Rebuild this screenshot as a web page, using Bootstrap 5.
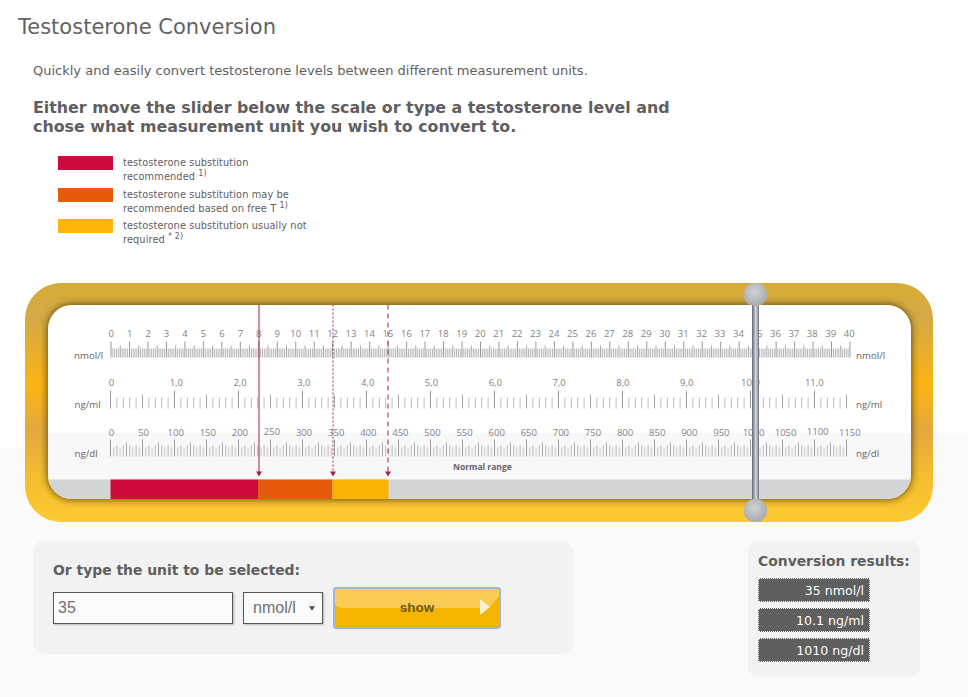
<!DOCTYPE html>
<html lang="en">
<head>
<meta charset="utf-8">
<title>Testosterone Conversion</title>
<link href="https://cdn.jsdelivr.net/npm/bootstrap@5.3.0/dist/css/bootstrap.min.css" rel="stylesheet">
<style>
html,body{height:697px;overflow:hidden}
body{font-family:"DejaVu Sans",Verdana,sans-serif;color:#5f5e60;
  background:linear-gradient(#fff,#fff) 0 433px/480px 15px no-repeat,linear-gradient(#fff 433px,#fafafa 433px) no-repeat}
.pg-title{font-size:21px;font-weight:400;line-height:24px;margin:15px 0 0 18px;color:#636265}
.pg-intro{font-size:13px;line-height:18px;margin:23px 0 0 33px}
.pg-lead{font-size:15.85px;font-weight:700;line-height:19px;margin:18px 0 0 33px}
.legend-box{margin:20px 0 0 58px}
.legend-item{height:31.5px}
.legend-swatch{width:55px;height:14px;margin-right:10px;flex:none}
.legend-text{font-size:9.8px;line-height:14px;letter-spacing:.1px;width:190px}
.legend-text sup{font-size:8px;top:-.45em;line-height:0}
.sw-red{background:#cf0a3c}.sw-orange{background:#e65a0c}.sw-yellow{background:#fdb50a}
.slide-frame{position:relative;width:908px;height:239px;margin:32.5px 0 0 25px;padding:21.5px 22.5px 23px;border-radius:36px;
  background:linear-gradient(#d6ac38 0,#d4aa45 15%,#fbb414 43%,#e2a93e 62%,#f2bd30 80%,#fcca30 100%)}
.slide-inner{height:194.5px;border-radius:24px;overflow:hidden;background:linear-gradient(#fff 128px,#f8f8f8 128px);
  box-shadow:0 0 7px 1px rgba(70,50,0,.75)}
.slide-inner svg{display:block}
.sc-num{font-family:"Open Sans",sans-serif;font-size:9.5px;fill:#828285;text-anchor:middle}
.sc-unit{font-family:"Open Sans",sans-serif;font-size:9.7px;fill:#646366}
.sc-range{font-family:"Open Sans",sans-serif;font-size:8.5px;font-weight:700;fill:#646366}
.slide-rod{position:absolute;left:727px;top:10px;width:7px;height:220px;background:linear-gradient(90deg,#5d6777,#a8aeb8 35%,#d8dce0 55%,#6a7280)}
.slide-knob{position:absolute;left:719px;width:23px;height:23px;border-radius:45%;background:radial-gradient(circle at 45% 40%,#d0d1d3,#a9aaad 75%,#8f9093)}
.knob-top{top:0}.knob-bot{bottom:0}
.lower-row{margin:19px 48px 0 33px}
.type-panel{width:540px;height:113px;background:#f2f2f2;border-radius:10px;padding:20px 20px 0}
.panel-head{font-size:13.9px;font-weight:700;line-height:18px;color:#5f5e60}
.unit-form{margin-top:8px;align-items:center}
.unit-input,.unit-select{font-family:"Liberation Sans",Arial,sans-serif;font-size:16px;color:#6f6f6f;height:32px;border:1px solid #555;border-radius:0;background-color:#fbfbfb;box-shadow:1px 1px 2px rgba(0,0,0,.25);padding:0 4px}
.unit-input{width:180px}
.unit-select{width:80px;margin-left:10px;padding:0 0 0 9px;background-position:right 7px center;background-size:6px 5px;
  background-image:url("data:image/svg+xml,%3csvg xmlns='http://www.w3.org/2000/svg' viewBox='0 0 8 6'%3e%3cpath fill='%23444' d='M0 0h8L4 6z'/%3e%3c/svg%3e")}
.show-btn{position:relative;overflow:hidden;width:168px;height:42px;margin-left:10px;padding:0;border:2px solid #9cb9dc;border-radius:3px;background:#f5b400;font-family:"Liberation Sans",Arial,sans-serif;font-size:13.5px;font-weight:700;color:#6e5820}
.show-btn:before{content:"";position:absolute;left:0;right:0;top:0;height:19px;background:#f9cb52;border-bottom-left-radius:8px 4px;clip-path:polygon(0 0,100% 0,100% 40%,94% 100%,0 100%)}
.show-btn b{position:relative}
.show-btn:after{content:"";position:absolute;right:9px;top:10px;border-left:10px solid #fdf3d0;border-top:8px solid transparent;border-bottom:8px solid transparent}
.result-panel{width:172px;height:136px;background:#f2f2f2;border-radius:10px;padding:11px 10px 10px}
.result-val{width:112px;height:24px;margin-top:6px;padding-right:5px;background:#5f5e60;color:#fff;border:1px dotted #fff;font-size:12.6px;line-height:24px;text-align:right}
.result-first{margin-top:8px}
</style>
</head>
<body>
<h1 class="pg-title">Testosterone Conversion</h1>
<p class="pg-intro">Quickly and easily convert testosterone levels between different measurement units.</p>
<h2 class="pg-lead">Either move the slider below the scale or type a testosterone level and<br>chose what measurement unit you wish to convert to.</h2>
<div class="legend-box d-flex flex-column">
  <div class="legend-item d-flex"><span class="legend-swatch sw-red"></span><span class="legend-text">testosterone substitution recommended <sup>1)</sup></span></div>
  <div class="legend-item d-flex"><span class="legend-swatch sw-orange"></span><span class="legend-text">testosterone substitution may be recommended based on free T <sup>1)</sup></span></div>
  <div class="legend-item d-flex"><span class="legend-swatch sw-yellow"></span><span class="legend-text">testosterone substitution usually not required <sup>* 2)</sup></span></div>
</div>
<div class="slide-frame">
  <div class="slide-inner">
    <svg id="scale" width="863" height="195" viewBox="47.5 304.5 863 195" xmlns="http://www.w3.org/2000/svg"></svg>
  </div>
  <div class="slide-rod"></div>
  <div class="slide-knob knob-top"></div>
  <div class="slide-knob knob-bot"></div>
</div>
<div class="lower-row d-flex justify-content-between align-items-start">
  <div class="type-panel">
    <div class="panel-head">Or type the unit to be selected:</div>
    <div class="unit-form d-flex">
      <input class="form-control unit-input" type="text" value="35">
      <select class="form-select unit-select"><option>nmol/l</option><option>ng/ml</option><option>ng/dl</option></select>
      <button class="btn show-btn" type="button"><b>show</b></button>
    </div>
  </div>
  <div class="result-panel">
    <div class="panel-head">Conversion results:</div>
    <div class="result-val result-first">35 nmol/l</div>
    <div class="result-val">10.1 ng/ml</div>
    <div class="result-val">1010 ng/dl</div>
  </div>
</div>
<script src="https://cdn.jsdelivr.net/npm/bootstrap@5.3.0/dist/js/bootstrap.bundle.min.js"></script>
<script>
(function(){
  var o=[];
  function tick(x,y1,y2,c){o.push('<line x1="'+x.toFixed(2)+'" x2="'+x.toFixed(2)+'" y1="'+y1+'" y2="'+y2+'" stroke="'+(c||'#a9a9ab')+'" stroke-width="1"/>');}
  function text(x,y,t,cl){o.push('<text x="'+x+'" y="'+y+'" class="'+cl+'">'+t+'</text>');}
  o.push('<rect x="47" y="479" width="864" height="21" fill="#d3d4d5"/>');
  o.push('<rect x="110" y="479" width="147.5" height="20.5" fill="#cf0a3c"/>');
  o.push('<rect x="257.5" y="479" width="74.5" height="20.5" fill="#e65a0c"/>');
  o.push('<rect x="332" y="479" width="56" height="20.5" fill="#f8b204"/>');
  var i,x;
  for(i=0;i<=400;i++){x=110.5+i*1.8475;
    if(i%10==0)tick(x,341,357,'#98989a');
    else if(i%5==0)tick(x,345,357,'#a5a5a7');
    else tick(x,348,357,'#b4b4b6');}
  for(i=0;i<=40;i++)text(110.7+i*18.45,336,i,'sc-num');
  for(i=0;i<=115;i++){x=110+i*6.4;
    if(i%10==0)tick(x,390,408,'#9a9a9c');
    else if(i%5==0)tick(x,394,408,'#a5a5a7');
    else tick(x,397,408,'#bcbcbe');}
  text(111,385,'0','sc-num');
  for(i=1;i<=11;i++)text(112+i*63.8,385,i+',0','sc-num');
  for(i=0;i<=230;i++){x=110+i*3.2;
    if(i%10==0)tick(x,439,456,'#9a9a9c');
    else if(i%5==0)tick(x,442,456,'#a5a5a7');
    else if(i%2==0)tick(x,445,456,'#b5b5b7');
    else tick(x,447,456,'#c4c4c6');}
  for(i=0;i<=23;i++){var v=i*50;text(111+i*32.1,(v==250||v==1100)?434:435,v,'sc-num');}
  text(73.5,358,'nmol/l','sc-unit');text(855.5,358,'nmol/l','sc-unit');
  text(74,407,'ng/ml','sc-unit');text(855.5,407,'ng/ml','sc-unit');
  text(74,456,'ng/dl','sc-unit');text(855.5,456,'ng/dl','sc-unit');
  text(452.5,469,'Normal range','sc-range');
  var mc='#a3214a';
  o.push('<line x1="258.5" x2="258.5" y1="304" y2="472" stroke="'+mc+'" stroke-width="1"/>');
  o.push('<line x1="332.5" x2="332.5" y1="304" y2="472" stroke="'+mc+'" stroke-width="1" stroke-dasharray="2 2"/>');
  o.push('<line x1="387.5" x2="387.5" y1="304" y2="472" stroke="'+mc+'" stroke-width="1" stroke-dasharray="5 4"/>');
  [258.5,332.5,387.5].forEach(function(m){o.push('<path d="M'+(m-3)+' 471h6l-3 5z" fill="'+mc+'"/>');});
  document.getElementById('scale').innerHTML=o.join('');
})();
</script>
</body>
</html>
